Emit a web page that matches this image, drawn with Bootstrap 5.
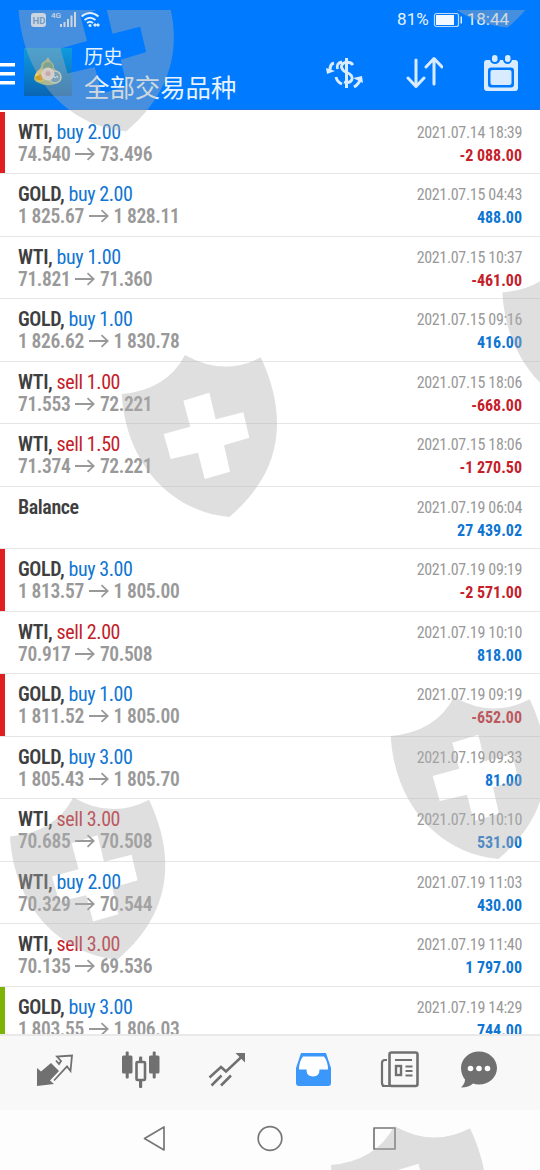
<!DOCTYPE html>
<html lang="zh-CN">
<head>
<meta charset="utf-8">
<meta name="viewport" content="width=device-width, initial-scale=1">
<title>历史</title>
<link href="https://cdn.jsdelivr.net/npm/bootstrap@5.3.0/dist/css/bootstrap.min.css" rel="stylesheet">
<style>
  body { width: 540px; height: 1170px; background: #fff; font-family: "Roboto Condensed", Roboto, "Noto Sans CJK SC", sans-serif; font-stretch: condensed; overflow: hidden; }
  svg { display: block; flex: none; }
  .top-area { height: 110px; background: #007aff; color: #e6f3ff; border-bottom: 1px solid #1b6fe0; font-family: Roboto, "Noto Sans CJK SC", sans-serif; font-stretch: normal; }
  .status { height: 38px; font-size: 17px; padding: 2px 31px 0 30px; }
  .titlebar { height: 72px; padding-right: 21px; }
  .t-small { font-size: 19.3px; line-height: 24px; }
  .t-big { font-size: 25.4px; line-height: 36px; }
  .deals { height: 924px; padding-top: 1.5px; overflow: hidden; }
  .deal { height: 62.5px; flex: none; padding: 9px 18px 0; border-bottom: 1.5px solid #e6e6e6; box-shadow: inset var(--edge, transparent) 5px 0; }
  .edge-red { --edge: #e02020; }
  .edge-green { --edge: #7cb305; }
  .sym { font-size: 20px; line-height: 23px; color: #3f3f3f; letter-spacing: -.4px; }
  .sym b { font-weight: 600; }
  .px { font-size: 19.5px; line-height: 22px; color: #999; font-weight: 600; letter-spacing: -.37px; }
  .px svg { margin: 0 4.500px 2px 5px; }
  .when { font-size: 16px; line-height: 24px; color: #999; letter-spacing: -.33px; }
  .amt { font-size: 16px; line-height: 21px; font-weight: 700; }
  .up { color: #0f75d2; }
  .down { color: #c4202a; }
  .tabs { height: 76px; background: #f8f8f8; border-top: 2px solid #e9e9e9; color: #707070; }
  .sysnav { height: 60px; background: #fdfdfd; }
  .marks { pointer-events: none; }
</style>
</head>
<body class="d-flex flex-column position-relative">
<header class="top-area d-flex flex-column">
  <div class="status d-flex justify-content-between align-items-center">
    <svg width="72" height="20" viewBox="0 0 72 20" fill="#e0efff">
      <rect x="1" y="3" width="15" height="14" rx="3"/>
      <text x="2.500" y="13.500" font-size="9.500" font-weight="700" fill="#4a8fd8" font-family="Roboto">HD</text>
      <text x="21" y="8" font-size="8" font-weight="500" font-family="Roboto">4G</text>
      <path d="M30 14h2v3h-2zM33.500 12h2v5h-2zM37 9h2v8h-2zM40.500 5.500h2v11.500h-2zM44 2h2v15h-2z"/>
      <g fill="none" stroke="#e0efff" stroke-width="2"><path d="M51.500 6.500q8.500-7 17 0M54.500 10q5.500-4.500 11 0M57 13q3-2.500 6 0"/></g>
      <circle cx="60" cy="15.500" r="1.500"/><path d="M63 15l2-2 2 2-2 2zM66 15l2-2 2 2-2 2z"/>
    </svg>
    <div class="d-flex align-items-center">
      <span>81%</span>
      <svg class="ms-1 me-1" width="30" height="16" viewBox="0 0 30 16"><rect x="1.500" y="1.500" width="24" height="13" rx="2" fill="none" stroke="#b9dbff" stroke-width="1.200"/><rect x="3" y="3" width="18" height="10" fill="#f1f8ff"/><path d="M27.500 4.500h1.500v7h-1.500z" fill="#e0efff"/></svg>
      <span>18:44</span>
    </div>
  </div>
  <div class="titlebar d-flex">
    <svg width="15" height="72" viewBox="0 0 15 72" fill="#fff"><path d="M0 26h15v3.500H0zM0 35h15v3.500H0zM0 44h15v3.500H0z"/></svg>
    <svg style="margin:11px 12px 0 9px" width="48" height="48" viewBox="0 0 48 48">
      <defs><linearGradient id="tile" x2="0" y2="1"><stop stop-color="#109adf"/><stop offset="1" stop-color="#0a66b4"/></linearGradient></defs>
      <rect width="48" height="48" fill="url(#tile)"/>
      <path d="M24 9l3 5q3 1 3 6l6 7q1 8-5 9-8 3-16-1-7-2-4-8l6-8q0-5 4-6z" fill="#a9bb83"/>
      <path d="M19 20q0-6 5-6t5 6q-5 3-10 0z" fill="#5f9d78"/>
      <path d="M11 28q1-6 7-7l2 12q-7 2-9-5z" fill="#f0d060"/><path d="M11 29l6-3 2 6q-5 2-8-3z" fill="#d89a12"/>
      <circle cx="31" cy="29" r="6" fill="#5c9cc0" stroke="#d4dcc0" stroke-width="1.500"/>
      <circle cx="24" cy="26" r="6" fill="#f1dfdb" stroke="#f7f2e8"/>
      <circle cx="24" cy="25.500" r="2.600" fill="#d8a9aa"/>
      <path d="M28 30l2-2 1 2 2-2 1 2" fill="none" stroke="#eef4fa"/>
    </svg>
    <div class="d-flex flex-column flex-grow-1" style="padding-top:9px"><span class="t-small">历史</span><span class="t-big">全部交易品种</span></div>
    <div class="d-flex align-items-center">
      <svg width="40" height="36" viewBox="0 0 40 36" fill="none" stroke="#d9ecff" stroke-width="2.800">
        <path d="M21.500 3v30" stroke-width="3"/><path d="M28 10Q25.500 6.500 20 7.500Q16 9 16.500 12.500Q18 16.500 22 17.500Q28 20 27 24.500Q24.500 29 19 27M17 7Q11 8 12.500 14M11 22Q12 27 17 29"/>
        <path d="M9 8Q5 9 5 15M29 32Q34 29 35.500 24" stroke-width="3"/><path d="M1 13l1 6 8-3zM28 23l9-2 1 7z" fill="#d9ecff" stroke="none"/>
      </svg>
      <svg style="margin:0 40px 0 40px" width="38" height="36" viewBox="0 0 38 36" fill="none" stroke="#d9ecff" stroke-width="3" stroke-linecap="round" stroke-linejoin="round"><path d="M11 5v26M3 23l8 8.500 8-8.500M29 29V4M21 12l8-8.500L37 12"/></svg>
      <svg width="36" height="38" viewBox="0 0 36 38"><path d="M4 6h3q1 4 5 4t5-4h3q1 4 4.500 4T29 6h3q3 0 3 3v25q0 3-3 3H4q-3 0-3-3V9q0-3 3-3z" fill="#d9ecff"/><rect x="5" y="13.500" width="26" height="20" rx="3" fill="#007aff"/><rect x="7.500" y="16" width="21" height="15" rx="2" fill="#d9ecff"/><rect x="9" y="1" width="5.500" height="7" rx="2.700" fill="#d9ecff"/><rect x="22" y="1" width="5.500" height="7" rx="2.700" fill="#d9ecff"/></svg>
    </div>
  </div>
</header>

<main class="deals d-flex flex-column flex-shrink-0" id="deals"></main>

<nav class="tabs position-relative flex-shrink-0">
  <svg width="540" height="74" viewBox="0 1036 540 74" fill="none" stroke="#707070">
    <path d="M37 1068l4 3.500 10-8.500 8 8-9 9.500 4 3.500-17 2z" fill="#707070" stroke="none"/>
    <path d="M56 1060.500l3 3.500 2-3-4-4.500 15-1-1.500 15.500-3.500-4.500L54 1080.500" stroke-width="1.800"/>
    <g fill="#707070" stroke="none"><rect x="122" y="1055.500" width="10.500" height="18" rx="1.500"/><rect x="125.700" y="1051.500" width="3" height="27" rx="1"/><rect x="149" y="1055.500" width="10.500" height="18" rx="1.500"/><rect x="152.700" y="1051.500" width="3" height="27" rx="1"/><rect x="139" y="1056.500" width="3.200" height="31.500" rx="1"/></g>
    <rect x="136.500" y="1062" width="8.500" height="18" rx="1" fill="#f8f8f8" stroke-width="2.600"/>
    <path d="M209.500 1077.500l11.500-10.500 5 4.500 17-16M211.500 1085.500l10-10M221 1085.500l10-10" stroke-width="2.500"/><path d="M235.500 1053h9.500v9.500z" fill="#707070" stroke="none"/>
    <path d="M301 1053h25l5 15v15q0 3-3 3h-29q-3 0-3-3v-15z" fill="#3b97fa" stroke="none"/><path d="M303 1056.500h21q4 5 4 13h-8.500q0 7-6.500 7t-6.500-7H299q0-8 4-13z" fill="#fff" stroke="none"/>
    <path d="M389 1086h-4q-3 0-3-3v-20q0-3 3-3h2" stroke-width="2.200"/><rect x="389.500" y="1052.500" width="28" height="33.500" rx="2" stroke-width="2.600"/><path d="M382 1086h34M395 1060h17M405.500 1066.500h7M405.500 1071h7M405.500 1075.500h7" stroke-width="2"/><rect x="396" y="1066" width="5" height="9" stroke-width="2.400"/>
    <path d="M479 1051.500c10 0 18 7.500 18 16.500s-8 16.500-18 16.500q-3.500 0-6-1-4 4-12 4 4-4 4-8-4-5-4-11.500c0-9 8-16.500 18-16.500z" fill="#707070" stroke="none"/><g fill="#fff" stroke="none"><circle cx="470.500" cy="1068.500" r="2.800"/><circle cx="479" cy="1068.500" r="2.800"/><circle cx="487.500" cy="1068.500" r="2.800"/></g>
  </svg>
</nav>
<footer class="sysnav flex-shrink-0">
  <svg width="540" height="60" viewBox="0 1110 540 60" fill="none" stroke="#777" stroke-width="1.700" stroke-linejoin="round"><path d="M144.500 1138.500l19.500-11.500v23z"/><circle cx="270" cy="1138.500" r="11.800"/><rect x="374" y="1128" width="21" height="21"/></svg>
</footer>

<svg class="marks position-absolute top-0 start-0" width="540" height="1170" viewBox="0 0 540 1170">
  <defs>
    <path id="shield" fill-rule="evenodd" d="M0 0Q45-4 63.300-39Q102-17 139-36.700C162 12 168 72 107.600 123C50 118 4 70 0 0zM61.600 6.700L68.600 32.700 42 40 49 65 76.300 58.700 83 85 108.300 77.700 102.300 51.300 127.600 43.700 121.600 18.300 94 25.300 87.600-1.300z"/>
    <clipPath id="below"><path d="M0 10h540v1160H0z"/></clipPath>
  </defs>
  <g fill="#afafaf" fill-opacity=".4" clip-path="url(#below)">
    <use href="#shield" x="18.500" y="8.400"/><use href="#shield" x="400" y="-95.500"/><use href="#shield" x="502.300" y="292.500"/><use href="#shield" x="121.700" y="394"/><use href="#shield" x="390.700" y="736"/><use href="#shield" x="10" y="836.500"/><use href="#shield" x="331" y="1165"/>
  </g>
</svg>

<script>
  // symbol, side + volume, open, close, time, profit, edge colour
  const deals = [
    ['WTI', 'buy 2.00', '74.540', '73.496', '2021.07.14 18:39', '-2 088.00', 'red'],
    ['GOLD', 'buy 2.00', '1 825.67', '1 828.11', '2021.07.15 04:43', '488.00'],
    ['WTI', 'buy 1.00', '71.821', '71.360', '2021.07.15 10:37', '-461.00'],
    ['GOLD', 'buy 1.00', '1 826.62', '1 830.78', '2021.07.15 09:16', '416.00'],
    ['WTI', 'sell 1.00', '71.553', '72.221', '2021.07.15 18:06', '-668.00'],
    ['WTI', 'sell 1.50', '71.374', '72.221', '2021.07.15 18:06', '-1 270.50'],
    ['Balance', '', '', '', '2021.07.19 06:04', '27 439.02'],
    ['GOLD', 'buy 3.00', '1 813.57', '1 805.00', '2021.07.19 09:19', '-2 571.00', 'red'],
    ['WTI', 'sell 2.00', '70.917', '70.508', '2021.07.19 10:10', '818.00'],
    ['GOLD', 'buy 1.00', '1 811.52', '1 805.00', '2021.07.19 09:19', '-652.00', 'red'],
    ['GOLD', 'buy 3.00', '1 805.43', '1 805.70', '2021.07.19 09:33', '81.00'],
    ['WTI', 'sell 3.00', '70.685', '70.508', '2021.07.19 10:10', '531.00'],
    ['WTI', 'buy 2.00', '70.329', '70.544', '2021.07.19 11:03', '430.00'],
    ['WTI', 'sell 3.00', '70.135', '69.536', '2021.07.19 11:40', '1 797.00'],
    ['GOLD', 'buy 3.00', '1 803.55', '1 806.03', '2021.07.19 14:29', '744.00', 'green']
  ];
  const arrow = '<svg width="20" height="14" viewBox="0 0 20 14" fill="none" stroke="#999" stroke-width="1.800"><path d="M0 7h18.500M12.500 1.200L18.800 7l-6.300 5.800"/></svg>';
  document.getElementById('deals').innerHTML = deals.map(([s, v, a, b, t, p, e]) => `
    <div class="deal d-flex justify-content-between ${e ? 'edge-' + e : ''}">
      <div><div class="sym"><b>${s}${v ? ',' : ''}</b> <span class="${v.startsWith('sell') ? 'down' : 'up'}">${v}</span></div>
      ${a ? `<div class="px d-flex align-items-center"><span>${a}</span>${arrow}<span>${b}</span></div>` : ''}</div>
      <div class="text-end"><div class="when">${t}</div><div class="amt ${p[0] === '-' ? 'down' : 'up'}">${p}</div></div>
    </div>`).join('');
</script>
<script src="https://cdn.jsdelivr.net/npm/bootstrap@5.3.0/dist/js/bootstrap.bundle.min.js"></script>
</body>
</html>
